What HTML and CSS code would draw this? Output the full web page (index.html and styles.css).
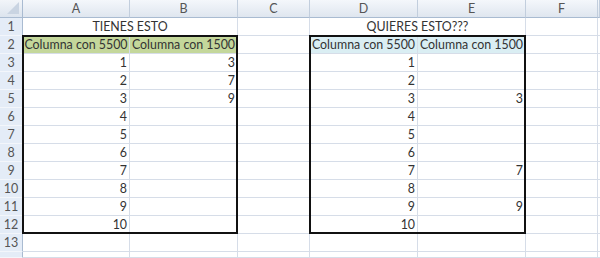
FILE: index.html
```html
<!DOCTYPE html>
<html lang="es">
<head>
<meta charset="utf-8">
<title>Hoja</title>
<link rel="stylesheet" href="styles.css">
</head>
<body>
<div class="frame">
<div class="sheet">
  <div class="corner"><span class="tri"></span></div>
  <div class="ch">A</div><div class="ch">B</div><div class="ch">C</div><div class="ch">D</div><div class="ch">E</div><div class="ch">F</div><div class="ch"></div>

  <div class="rh">1</div>
  <div class="c c-merge">TIENES ESTO</div><div class="c"></div><div class="c c-merge">QUIERES ESTO???</div><div class="c"></div><div class="c"></div>

  <div class="rh">2</div>
  <div class="c green">Columna con 5500</div><div class="c green">Columna con 1500</div><div class="c"></div><div class="c blue">Columna con 5500</div><div class="c blue">Columna con 1500</div><div class="c"></div><div class="c"></div>

  <div class="rh">3</div>
  <div class="c n">1</div><div class="c n">3</div><div class="c"></div><div class="c n">1</div><div class="c n"></div><div class="c"></div><div class="c"></div>
  <div class="rh">4</div>
  <div class="c n">2</div><div class="c n">7</div><div class="c"></div><div class="c n">2</div><div class="c n"></div><div class="c"></div><div class="c"></div>
  <div class="rh">5</div>
  <div class="c n">3</div><div class="c n">9</div><div class="c"></div><div class="c n">3</div><div class="c n">3</div><div class="c"></div><div class="c"></div>
  <div class="rh">6</div>
  <div class="c n">4</div><div class="c n"></div><div class="c"></div><div class="c n">4</div><div class="c n"></div><div class="c"></div><div class="c"></div>
  <div class="rh">7</div>
  <div class="c n">5</div><div class="c n"></div><div class="c"></div><div class="c n">5</div><div class="c n"></div><div class="c"></div><div class="c"></div>
  <div class="rh">8</div>
  <div class="c n">6</div><div class="c n"></div><div class="c"></div><div class="c n">6</div><div class="c n"></div><div class="c"></div><div class="c"></div>
  <div class="rh">9</div>
  <div class="c n">7</div><div class="c n"></div><div class="c"></div><div class="c n">7</div><div class="c n">7</div><div class="c"></div><div class="c"></div>
  <div class="rh">10</div>
  <div class="c n">8</div><div class="c n"></div><div class="c"></div><div class="c n">8</div><div class="c n"></div><div class="c"></div><div class="c"></div>
  <div class="rh">11</div>
  <div class="c n">9</div><div class="c n"></div><div class="c"></div><div class="c n">9</div><div class="c n">9</div><div class="c"></div><div class="c"></div>
  <div class="rh">12</div>
  <div class="c n">10</div><div class="c n"></div><div class="c"></div><div class="c n">10</div><div class="c n"></div><div class="c"></div><div class="c"></div>
  <div class="rh">13</div>
  <div class="c"></div><div class="c"></div><div class="c"></div><div class="c"></div><div class="c"></div><div class="c"></div><div class="c"></div>
  <div class="rh"></div>
  <div class="c"></div><div class="c"></div><div class="c"></div><div class="c"></div><div class="c"></div><div class="c"></div><div class="c"></div>
</div>
<div class="sheet overlay">
  <div class="box box-left"></div>
  <div class="box box-right"></div>
</div>
</div>
</body>
</html>
```
FILE: styles.css
```css
html, body {
  margin: 0;
  padding: 0;
  background: #ffffff;
  overflow: hidden;
}

.frame {
  display: grid;
  width: 600px;
  height: 258px;
  overflow: hidden;
}

.sheet {
  grid-area: 1 / 1;
  display: grid;
  grid-template-columns: 23px 107px 108px 72px 108px 108px 72px 2px;
  grid-template-rows: 18px repeat(13, 18px) 6px;
  font-family: "Lato", "Open Sans", sans-serif;
  font-size: 12.4px;
  color: #333333;
  width: 600px;
  height: 258px;
  overflow: hidden;
}

.overlay {
  pointer-events: none;
  z-index: 2;
}

.corner {
  background: linear-gradient(#f2f5f9, #dce4ee);
  border-right: 1px solid #a9bbd1;
  border-bottom: 1px solid #a9bbd1;
  position: relative;
}

.tri {
  position: absolute;
  right: 3px;
  bottom: 3px;
  width: 0;
  height: 0;
  border-left: 12px solid transparent;
  border-bottom: 12px solid #c9d4e2;
}

.ch {
  background: linear-gradient(#f4f7fb, #dfe6ef);
  border-right: 1px solid #c2cedd;
  border-bottom: 1px solid #a9bbd1;
  text-align: center;
  color: #555555;
  font-size: 12.5px;
  line-height: 18px;
}

.rh {
  background: #e4ecf7;
  border-right: 1px solid #a9bbd1;
  border-bottom: 1px solid #f3f6fb;
  text-align: center;
  color: #555555;
  font-size: 12.5px;
  line-height: 18px;
}

.c {
  border-right: 1px solid #d6dde8;
  border-bottom: 1px solid #d6dde8;
  line-height: 18px;
  white-space: nowrap;
  overflow: hidden;
  padding: 0 2px;
}

.c-merge {
  grid-column: span 2;
  text-align: center;
}

.n {
  text-align: right;
}

.green {
  background: #c4d79b;
  text-align: center;
  padding: 0;
}

.blue {
  background: #daeef3;
  text-align: center;
  padding: 0;
}

.box {
  grid-row: 3 / 14;
  border: 2px solid #111111;
  margin: -1px 0 0 -1px;
}

.box-left {
  grid-column: 2 / 4;
}

.box-right {
  grid-column: 5 / 7;
}
```
